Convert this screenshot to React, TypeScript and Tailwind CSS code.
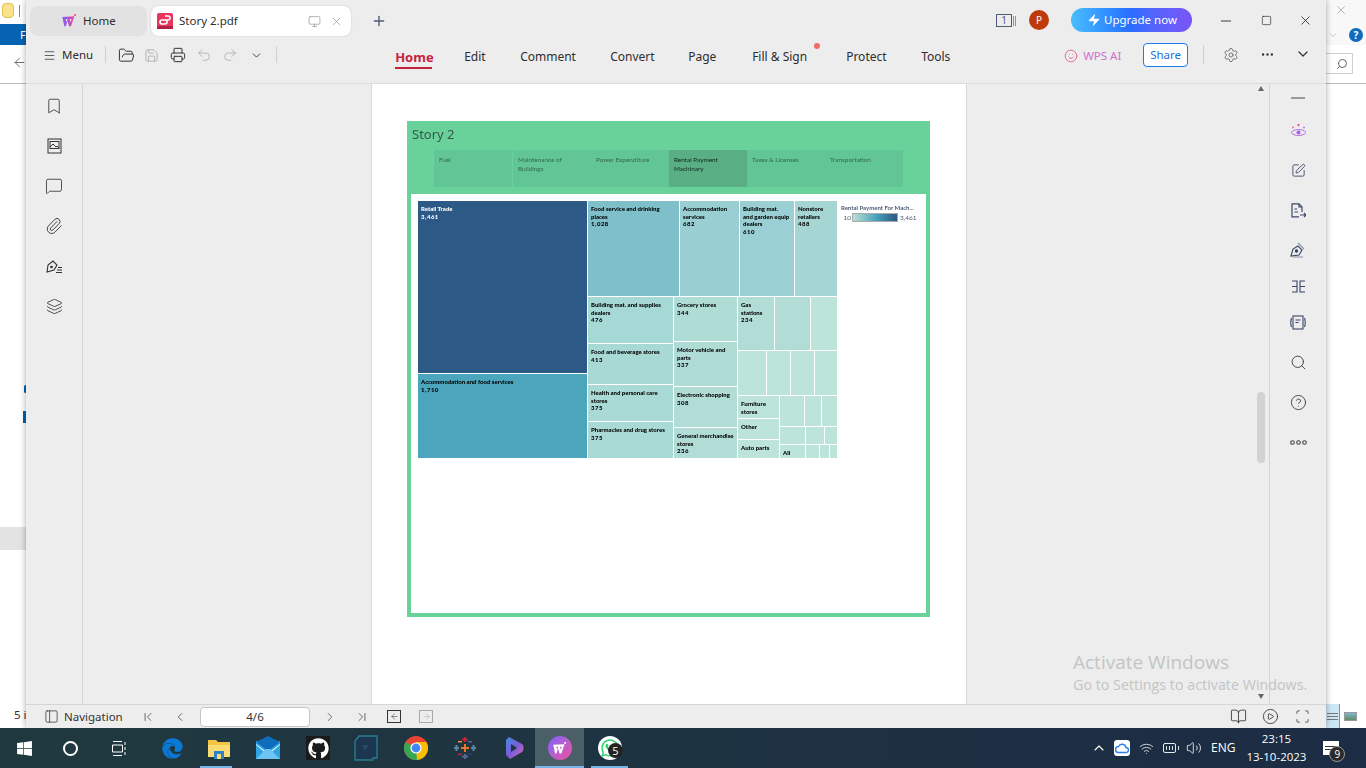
import React from "react";
import {
  Menu, FolderOpen, Save, Printer, Undo2, Redo2, ChevronDown, Monitor, X, Plus, Settings, Ellipsis, Minus, Square,
  Bookmark, MessageSquare, Paperclip, Layers, SquarePen, Search, CircleHelp, PanelLeft, ChevronFirst, ChevronLeft,
  ChevronRight, ChevronLast, ArrowLeft, ArrowRight, BookOpen, CirclePlay, Scan, Wifi, BatteryFull, Volume2, ChevronUp, Zap, Smile,
} from "lucide-react";
import { FaGithub, FaWhatsapp, FaWindows, FaEdge } from "react-icons/fa";

const WpsW = ({ s = 18, grad = false }: { s?: number; grad?: boolean }) => (
  <svg width={s} height={s} viewBox="0 0 24 24" fill="none">
    <defs>
      <linearGradient id="wg" x1="0" x2="1">
        <stop offset="0" stopColor="#7b5cff" />
        <stop offset="1" stopColor="#f0489a" />
      </linearGradient>
    </defs>
    <path d="M2 6l18-1-5 15h-3l-2-8-3 8H5z M7 9l1 5 2-5z M13 9l1 5 2-5z" fill={grad ? "url(#wg)" : "#fff"} fillRule="evenodd" />
    <circle cx="21" cy="3" r="1.6" fill={grad ? "#f0489a" : "#fff"} />
  </svg>
);

const Cell = ({ c, t, n, light }: { c: string; t?: string; n?: string; light?: boolean }) => (
  <div className={`${c} shrink-0 overflow-hidden px-[3px] pt-[4px] text-[6px] leading-[7.5px] font-black ${light ? "text-white" : "text-black"}`}>
    {t && <div className="whitespace-pre-line">{t}</div>}
    {n && <div className="tracking-[0.5px]">{n}</div>}
  </div>
);

const tabs: [string, string][] = [
  ["Edit", "w-[56px]"],
  ["Comment", "w-[90px]"],
  ["Convert", "w-[78px]"],
  ["Page", "w-[64px]"],
  ["Fill & Sign", "w-[94px]"],
  ["Protect", "w-[75px]"],
  ["Tools", "w-[60px]"],
];

const storyTabs: [string, string][] = [
  ["Fuel", "w-[79px] bg-[#62c596] border-r border-[#69d29b] text-[#35694e]"],
  ["Maintenance of Buildings", "w-[78px] bg-[#62c596] text-[#35694e]"],
  ["Power Expenditure", "w-[78px] bg-[#62c596] text-[#35694e]"],
  ["Rental Payment Machinary", "w-[78px] bg-[#5aae84] text-[#10281c]"],
  ["Taxes & Licenses", "w-[78px] bg-[#62c596] text-[#35694e]"],
  ["Transportation", "w-[78px] bg-[#62c596] text-[#35694e]"],
];

function Treemap() {
  return (
    <div className="flex gap-px ml-[7px] mt-[7px] w-[419px] h-[257px] bg-white blur-[0.3px] font-['Lato',sans-serif] shrink-0">
      <div className="flex flex-col gap-px w-[169px]">
        <Cell c="h-[172px] bg-[#2c5985]" t="Retail Trade" n="3,461" light />
        <Cell c="h-[84px] bg-[#4ba5bc]" t="Accommodation and food services" n="1,710" />
      </div>
      <div className="flex flex-col gap-px w-[249px]">
        <div className="flex gap-px h-[95px]">
          <Cell c="w-[91px] bg-[#7fbfc9]" t={"Food service and drinking\nplaces"} n="1,028" />
          <Cell c="w-[59px] bg-[#99cfd2]" t="Accommodation services" n="682" />
          <Cell c="w-[54px] bg-[#9ad0d3]" t={"Building mat.\nand garden equip\ndealers"} n="610" />
          <Cell c="w-[42px] bg-[#a5d6d3]" t="Nonstore retailers" n="488" />
        </div>
        <div className="flex gap-px h-[161px]">
          <div className="flex flex-col gap-px w-[85px]">
            <Cell c="h-[46px] bg-[#a6d8d5]" t="Building mat. and supplies dealers" n="476" />
            <Cell c="h-[40px] bg-[#a8d9d5]" t="Food and beverage stores" n="413" />
            <Cell c="h-[36px] bg-[#a9dad5]" t="Health and personal care stores" n="375" />
            <Cell c="h-[36px] bg-[#a9dad5]" t="Pharmacies and drug stores" n="375" />
          </div>
          <div className="flex flex-col gap-px w-[63px]">
            <Cell c="h-[44px] bg-[#b0dcd6]" t="Grocery stores" n="344" />
            <Cell c="h-[44px] bg-[#b0dcd6]" t="Motor vehicle and parts" n="337" />
            <Cell c="h-[40px] bg-[#b1ddd6]" t="Electronic shopping" n="308" />
            <Cell c="h-[30px] bg-[#b2ddd6]" t="General merchandise stores" n="236" />
          </div>
          <div className="flex flex-col gap-px w-[99px]">
            <div className="flex gap-px h-[53px]">
              <Cell c="w-[36px] bg-[#b2ddd6]" t="Gas stations" n="234" />
              <Cell c="w-[35px] bg-[#b2ddd6]" />
              <Cell c="w-[26px] bg-[#bce4d9]" />
            </div>
            <div className="flex gap-px h-[44px]">
              <Cell c="w-[28px] bg-[#bce4d9]" />
              <Cell c="w-[23px] bg-[#bce4d9]" />
              <Cell c="w-[23px] bg-[#bce4d9]" />
              <Cell c="w-[22px] bg-[#bce4d9]" />
            </div>
            <div className="flex gap-px h-[62px]">
              <div className="flex flex-col gap-px w-[41px]">
                <Cell c="h-[22px] bg-[#bce4d9]" t="Furniture stores" />
                <Cell c="h-[20px] bg-[#bce4d9]" t="Other" />
                <Cell c="h-[18px] bg-[#bce4d9]" t="Auto parts" />
              </div>
              <div className="flex flex-col gap-px w-[57px]">
                <div className="flex gap-px h-[30px]">
                  <Cell c="w-[24px] bg-[#bce4d9]" />
                  <Cell c="w-[16px] bg-[#bce4d9]" />
                  <Cell c="w-[15px] bg-[#bce4d9]" />
                </div>
                <div className="flex gap-px h-[17px]">
                  <Cell c="w-[25px] bg-[#bce4d9]" />
                  <Cell c="w-[18px] bg-[#bce4d9]" />
                  <Cell c="w-[12px] bg-[#bce4d9]" />
                </div>
                <div className="flex gap-px h-[13px]">
                  <Cell c="w-[25px] bg-[#bce4d9]" t="All" />
                  <Cell c="w-[13px] bg-[#bce4d9]" />
                  <Cell c="w-[9px] bg-[#bce4d9]" />
                  <Cell c="w-[7px] bg-[#bce4d9]" />
                </div>
              </div>
            </div>
          </div>
        </div>
      </div>
    </div>
  );
}

function Page() {
  return (
    <div className="w-[596px] h-full bg-white border-x border-[#d8d8d8] pl-[35px] pt-[37px] shrink-0">
      <div className="w-[523px] h-[496px] bg-[#69d29b] border-x-4 border-b-4 border-[#69d29b] flex flex-col">
        <div className="h-[29px] pl-px pt-[5px] text-[13px] leading-[16px] text-[#35574a] font-['Noto_Sans',sans-serif] blur-[0.2px]">Story 2</div>
        <div className="flex ml-[23px] w-[469px] h-[37px] blur-[0.25px] font-['Lato',sans-serif]">
          {storyTabs.map(([t, c]) => (
            <div key={t} className={`${c} px-[5px] pt-[5px] text-[6.4px] leading-[9px]`}>{t}</div>
          ))}
        </div>
        <div className="h-[7px]" />
        <div className="flex-1 bg-white flex items-start">
          <Treemap />
          <div className="ml-[4px] mt-[10px] w-[80px] blur-[0.25px] font-['Lato',sans-serif] text-[#4a5a70]">
            <div className="text-[6px] leading-[8px] font-bold whitespace-nowrap">Rental Payment For Mach...</div>
            <div className="flex items-center text-[6.5px] mt-px">
              <span className="w-[11px] text-right pr-px">10</span>
              <div className="w-[46px] h-[9px] border border-[#aaaaaa] bg-gradient-to-r from-[#b8e0d6] via-[#4ba5bc] to-[#2c5985]" />
              <span className="pl-[2px]">3,461</span>
            </div>
          </div>
        </div>
      </div>
    </div>
  );
}

const Rail = ({ className, children }: { className: string; children: React.ReactNode }) => (
  <div className={`flex flex-col items-center ${className}`}>{children}</div>
);

const RI = ({ h, children }: { h: string; children: React.ReactNode }) => (
  <div className={`${h} w-full flex items-center justify-center shrink-0`}>{children}</div>
);

function Window() {
  return (
    <div className="w-[1300px] h-full bg-[#ededed] flex flex-col shadow-[0_0_6px_rgba(0,0,0,0.35)] relative z-10 text-[#2e2e2e]">
      {/* tab row */}
      <div className="h-[40px] flex items-start pt-[6px] pl-[4px] shrink-0">
        <div className="w-[117px] h-[30px] bg-[#e2e2e2] rounded-lg flex items-center pl-[31px] gap-[6px] text-[11.5px]">
          <WpsW s={16} grad />
          <span>Home</span>
        </div>
        <div className="w-[200px] h-[30px] ml-[4px] bg-white rounded-lg flex items-center pl-[6px] text-[11.5px] shadow-[0_0_2px_rgba(0,0,0,0.15)]">
          <svg width="16" height="16" viewBox="0 0 16 16" className="shrink-0">
            <rect width="16" height="16" rx="2" fill="#e8365d" />
            <rect y="13" width="16" height="3" fill="#b41f43" />
            <path d="M8 3h3a2 2 0 0 1 0 4H8a2 2 0 0 1 0 4H5a1.5 1.5 0 0 1 0-4h3" fill="none" stroke="#fff" strokeWidth="1.6" />
          </svg>
          <span className="ml-[6px] w-[129px] shrink-0 whitespace-nowrap">Story 2.pdf</span>
          <Monitor size={13} strokeWidth={1.2} className="shrink-0 text-[#8c8c8c]" />
          <X size={13} strokeWidth={1.2} className="shrink-0 ml-[9px] text-[#8c8c8c]" />
        </div>
        <Plus size={16} strokeWidth={2} className="ml-[20px] mt-[7px] text-[#4d5a78]" />
        <div className="ml-[609px] mt-[8px] w-[16px] h-[13px] border border-[#4d5a78] text-[10px] leading-[11px] text-center text-[#4d5a78]">1</div>
        <div className="ml-[1px] mt-[10px] w-[3px] h-[10px] border-x border-[#8a93a8]" />
        <div className="ml-[13px] mt-[4px] w-[20px] h-[20px] rounded-full bg-[#bf3a0a] text-white text-[10px] flex items-center justify-center">P</div>
        <div className="ml-[22px] mt-[2px] w-[121px] h-[24px] rounded-full bg-gradient-to-r from-[#4bbdfd] via-[#2a6cff] to-[#7a54f7] text-white text-[11.5px] flex items-center pl-[16px] gap-[3px]">
          <Zap size={14} fill="#fff" strokeWidth={0} />
          <span>Upgrade now</span>
        </div>
        <Minus size={16} strokeWidth={1.3} className="ml-[26px] mt-[7px] text-[#222]" />
        <Square size={11} strokeWidth={1.4} className="ml-[27px] mt-[9px] text-[#222]" />
        <X size={15} strokeWidth={1.3} className="ml-[26px] mt-[7px] text-[#222]" />
      </div>

      {/* toolbar */}
      <div className="h-[44px] shrink-0 border-b border-[#dcdcdc] flex items-start pt-[3px] relative">
        <Menu size={13} strokeWidth={1.4} className="ml-[17px] mt-[6px] text-[#333]" />
        <span className="ml-[6px] text-[11.5px] leading-[24px]">Menu</span>
        <div className="ml-[12px] mt-[3px] w-px h-[17px] bg-[#d0d0d0]" />
        <FolderOpen size={17} strokeWidth={1.4} className="ml-[12px] mt-[4px] text-[#333]" />
        <Save size={15} strokeWidth={1.3} className="ml-[9px] mt-[5px] text-[#a9a9a9]" />
        <Printer size={16} strokeWidth={1.5} className="ml-[11px] mt-[4px] text-[#333]" />
        <Undo2 size={16} strokeWidth={1.2} className="ml-[10px] mt-[4px] text-[#a9a9a9]" />
        <Redo2 size={16} strokeWidth={1.2} className="ml-[10px] mt-[4px] text-[#a9a9a9]" />
        <ChevronDown size={13} strokeWidth={1.8} className="ml-[12px] mt-[6px] text-[#444]" />
        <div className="ml-[13px] mt-[3px] w-px h-[17px] bg-[#d0d0d0]" />
        <div className="ml-[118px] flex text-[12px] leading-[18px] pt-[5px]">
          <div className="w-[69px]">
            <span className="inline-block font-bold text-[13px] text-[#c8213f] border-b-2 border-[#c8213f] pb-px w-[37px] h-[21px] whitespace-nowrap">Home</span>
          </div>
          {tabs.map(([t, w]) => (
            <div key={t} className={`${w} relative`}>
              {t}
              {t === "Fill & Sign" && <span className="absolute left-[62px] -top-[5px] w-[6px] h-[6px] rounded-full bg-[#f26a6a]" />}
            </div>
          ))}
        </div>
        <div className="ml-[83px] w-[57px] mt-[4px] flex items-center text-[11.5px] text-[#cf6fcf] gap-[5px]">
          <Smile size={14} strokeWidth={1.5} className="shrink-0 text-[#e0609c]" />
          <span className="whitespace-nowrap">WPS AI</span>
        </div>
        <div className="ml-[22px] w-[45px] h-[24px] rounded border border-[#1a7cf0] bg-white text-[#1a6fdc] text-[11.5px] flex items-center justify-center">Share</div>
        <div className="ml-[15px] mt-[2px] w-px h-[19px] bg-[#cfcfcf]" />
        <Settings size={16} strokeWidth={1.3} className="ml-[19px] mt-[4px] text-[#666]" />
        <Ellipsis size={15} strokeWidth={1.8} className="ml-[21px] mt-[4px] text-[#333]" />
        <ChevronDown size={16} strokeWidth={1.8} className="ml-[20px] mt-[3px] text-[#333]" />
      </div>

      {/* body */}
      <div className="flex-1 flex min-h-0">
        <Rail className="w-[57px] border-r border-[#d4d4d4] pt-[2px] shrink-0">
          <RI h="h-[40px]"><Bookmark size={18} strokeWidth={1.1} className="text-[#333]" /></RI>
          <RI h="h-[40px]">
            <svg width="15" height="16" viewBox="0 0 15 16" fill="none" stroke="#333" strokeWidth="1">
              <rect x="1" y="1" width="13" height="14" />
              <rect x="3" y="3.5" width="9" height="7" />
              <path d="M3 9l3-3 3 3 1-1 2 2" />
            </svg>
          </RI>
          <RI h="h-[40px]"><MessageSquare size={18} strokeWidth={1.1} className="text-[#333]" /></RI>
          <RI h="h-[40px]"><Paperclip size={18} strokeWidth={1.2} className="text-[#333]" /></RI>
          <RI h="h-[40px]">
            <svg width="17" height="16" viewBox="0 0 17 16" fill="none" stroke="#333" strokeWidth="1.1">
              <path d="M1 14l1-7 5-4 4 4-3 5z" />
              <circle cx="5.5" cy="9" r="0.8" fill="#333" />
              <path d="M11 12h5M10 14.5h6M12 9.5h4" />
            </svg>
          </RI>
          <RI h="h-[40px]"><Layers size={17} strokeWidth={1.2} className="text-[#333]" /></RI>
        </Rail>
        <div className="flex-1 flex justify-center pr-[1px] relative min-w-0">
          <div className="w-[288px] shrink-0" />
          <Page />
          <div className="flex-1 flex justify-end">
            <div className="w-[14px] flex flex-col items-center pt-px">
              <div className="w-0 h-0 border-x-[3.5px] border-x-transparent border-b-[5px] border-b-[#666] mt-[1px]" />
              <div className="mt-[301px] w-[8px] h-[71px] bg-[#d2d2d2] rounded-full" />
              <div className="mt-[231px] w-0 h-0 border-x-[3.5px] border-x-transparent border-t-[5px] border-t-[#666]" />
            </div>
          </div>
        </div>
        <Rail className="w-[57px] border-l border-[#d4d4d4] shrink-0 text-[#3b4668]">
          <RI h="h-[28px]"><div className="w-[14px] h-[1.5px] bg-[#9a9a9a]" /></RI>
          <RI h="h-[38px]">
            <svg width="17" height="16" viewBox="0 0 17 16" fill="none">
              <path d="M1 9.5c3-4 12-4 15 0c-3 4-12 4-15 0z" stroke="#b565e8" strokeWidth="1" />
              <circle cx="8.5" cy="9.5" r="2" fill="#a35be8" />
              <circle cx="8.5" cy="2" r="1.2" fill="#e0609c" />
              <circle cx="3" cy="4.5" r="0.9" fill="#e0609c" />
              <circle cx="14" cy="4.5" r="0.9" fill="#b565e8" />
            </svg>
          </RI>
          <RI h="h-[40px]"><SquarePen size={15} strokeWidth={1.4} /></RI>
          <RI h="h-[40px]">
            <svg width="15" height="15" viewBox="0 0 15 15" fill="none" stroke="#3b4668" strokeWidth="1.2">
              <path d="M11 9V4L8 .8H1v13h7" />
              <path d="M8 1v3h3M3.5 6H6M3.5 9H7M9 12h6M13 10l2 2-2 2" />
            </svg>
          </RI>
          <RI h="h-[40px]">
            <svg width="16" height="16" viewBox="0 0 16 16" fill="none" stroke="#3b4668" strokeWidth="1.1">
              <path d="M1 14l2-7 5-3 4 4-3 5z" />
              <circle cx="6.5" cy="9" r="1.2" fill="#3b4668" />
              <path d="M8 1l6 6M3 15h10" stroke="#8890a8" />
            </svg>
          </RI>
          <RI h="h-[32px]">
            <svg width="15" height="13" viewBox="0 0 15 13" fill="none" stroke="#3b4668" strokeWidth="1.1">
              <path d="M1 1h5v11H1M1 6.5h5M14 1H9v11h5M9 6.5h5" />
            </svg>
          </RI>
          <RI h="h-[40px]">
            <svg width="16" height="15" viewBox="0 0 16 15" fill="none" stroke="#3b4668" strokeWidth="1.1">
              <rect x="3" y="1" width="10" height="13" />
              <path d="M1.5 3c-1 3-1 6 0 9M14.5 3c1 3 1 6 0 9M5.5 5h5M5.5 7.5h3" />
            </svg>
          </RI>
          <RI h="h-[40px]"><Search size={17} strokeWidth={1.2} className="text-[#333]" /></RI>
          <RI h="h-[40px]"><CircleHelp size={17} strokeWidth={1.2} className="text-[#333]" /></RI>
          <RI h="h-[40px]">
            <svg width="17" height="5" viewBox="0 0 17 5" fill="none" stroke="#444" strokeWidth="1.1">
              <circle cx="2.5" cy="2.5" r="1.8" />
              <circle cx="8.5" cy="2.5" r="1.8" />
              <circle cx="14.5" cy="2.5" r="1.8" />
            </svg>
          </RI>
        </Rail>
      </div>

      {/* status bar */}
      <div className="h-[24px] shrink-0 border-t border-[#d5d5d5] flex items-center text-[#333]">
        <PanelLeft size={15} strokeWidth={1.2} className="ml-[18px] shrink-0" />
        <span className="ml-[5px] w-[58px] shrink-0 text-[11.5px] whitespace-nowrap">Navigation</span>
        <ChevronFirst size={14} strokeWidth={1.2} className="ml-[19px] shrink-0" />
        <ChevronLeft size={14} strokeWidth={1.2} className="ml-[18px] shrink-0" />
        <div className="ml-[13px] w-[110px] h-[20px] shrink-0 bg-white border border-[#c4c4c4] rounded text-[11.5px] flex items-center justify-center">4/6</div>
        <ChevronRight size={14} strokeWidth={1.2} className="ml-[13px] shrink-0" />
        <ChevronLast size={14} strokeWidth={1.2} className="ml-[18px] shrink-0" />
        <div className="ml-[18px] w-[14px] h-[13px] shrink-0 border border-[#333] flex items-center justify-center"><ArrowLeft size={9} strokeWidth={1.4} /></div>
        <div className="ml-[18px] w-[14px] h-[13px] shrink-0 border border-[#aaa] flex items-center justify-center text-[#aaa]"><ArrowRight size={9} strokeWidth={1.4} /></div>
        <BookOpen size={17} strokeWidth={1.2} className="ml-[797px] shrink-0" />
        <CirclePlay size={17} strokeWidth={1.2} className="ml-[15px] shrink-0" />
        <Scan size={15} strokeWidth={1.3} className="ml-[16px] shrink-0" />
      </div>
    </div>
  );
}

function LeftSliver() {
  return (
    <div className="w-[26px] h-full bg-white flex flex-col shrink-0 overflow-hidden">
      <div className="h-[24px] bg-white flex items-start pt-[3px] pl-[2px] gap-[5px] shrink-0">
        <div className="w-[12px] h-[15px] bg-[#fbe38e] border border-[#e2c04e] rounded-sm" />
        <div className="w-px h-[12px] bg-[#888] mt-[2px]" />
      </div>
      <div className="h-[21px] bg-[#0563b1] text-white text-[11px] leading-[21px] pl-[20px] shrink-0">F</div>
      <div className="h-[39px] border-b border-[#bcbcbc] pl-[12px] pt-[10px] shrink-0">
        <ArrowLeft size={15} strokeWidth={1.5} className="text-[#666]" />
      </div>
      <div className="h-[301px] shrink-0" />
      <div className="w-[3px] h-[8px] bg-[#0563b1] rounded-full ml-[24px] shrink-0" />
      <div className="h-[18px] shrink-0" />
      <div className="w-[3px] h-[12px] bg-[#0563b1] ml-[23px] shrink-0" />
      <div className="h-[104px] shrink-0" />
      <div className="h-[23px] bg-[#e3e3e3] shrink-0" />
      <div className="h-[157px] shrink-0" />
      <div className="text-[11.5px] leading-[16px] text-[#333] pl-[14px] whitespace-nowrap">5 i</div>
    </div>
  );
}

function RightSliver() {
  return (
    <div className="w-[40px] h-full bg-white flex flex-col shrink-0 overflow-hidden">
      <div className="h-[24px] bg-[#f8f8f8] pl-[8px] pt-[3px] shrink-0">
        <X size={14} strokeWidth={1} className="text-[#888]" />
      </div>
      <div className="h-[21px] bg-[#f8f8f8] flex items-center pl-[1px] gap-[10px] shrink-0">
        <ChevronDown size={12} strokeWidth={1} className="text-[#999]" />
        <div className="w-[14px] h-[14px] rounded-full bg-[#0f6cbd] text-white text-[10px] font-bold leading-[14px] text-center">?</div>
      </div>
      <div className="h-[39px] border-b border-[#bcbcbc] pt-[8px] shrink-0">
        <div className="w-[27px] h-[21px] border border-[#d0d0d0] border-l-0 flex items-center justify-end pr-[4px]">
          <Search size={12} strokeWidth={2} className="text-[#666] -scale-x-100" />
        </div>
      </div>
      <div className="h-[620px] shrink-0" />
      <div className="h-[24px] flex items-center shrink-0">
        <div className="w-[14px] h-[24px] bg-[#cde6f7] border-r border-[#4aa3df] flex flex-col justify-center gap-[2px] pl-[1px]">
          <div className="h-px w-[11px] bg-[#777]" />
          <div className="h-px w-[11px] bg-[#777]" />
          <div className="h-px w-[11px] bg-[#777]" />
        </div>
        <div className="ml-[4px] w-[13px] h-[9px] border border-[#999] bg-gradient-to-b from-[#7fb5d9] to-[#5f8f5f]" />
      </div>
    </div>
  );
}

function Taskbar() {
  return (
    <div className="h-[40px] shrink-0 bg-gradient-to-r from-[#20393f] to-[#1c2c44] flex items-center text-white relative z-20">
      <FaWindows size={17} className="ml-[16px] shrink-0" />
      <div className="ml-[30px] w-[15px] h-[15px] rounded-full border-2 border-white shrink-0" />
      <svg width="16" height="15" viewBox="0 0 16 15" fill="none" stroke="#fff" className="ml-[34px] shrink-0">
        <path d="M1 .5h9M1 14.5h9M.5 4h10v7H.5zM13 1v3M13 6v3M13 11v3" />
      </svg>
      <FaEdge size={21} className="ml-[34px] text-[#0a78d7] shrink-0" />
      <div className="ml-[16px] w-[40px] h-[40px] flex items-center justify-center relative shrink-0">
        <svg width="22" height="21" viewBox="0 0 22 21">
          <path d="M0 2h8l2 2h12v15H0z" fill="#f4c542" />
          <rect x="0" y="7" width="22" height="12" fill="#fbdc74" />
          <rect x="6" y="13" width="10" height="8" fill="#2f82c8" />
          <rect x="9" y="16" width="4" height="5" fill="#fbdc74" />
        </svg>
        <div className="absolute bottom-0 left-[1px] w-[32px] h-[2px] bg-[#74b4e6]" />
      </div>
      <svg width="24" height="24" viewBox="0 0 24 24" className="ml-[17px] shrink-0">
        <rect y="5" width="24" height="18" fill="#2ea3e6" />
        <path d="M0 6L12 0l12 6-12 9z" fill="#0f6cbd" />
        <path d="M0 8l12 9 12-9v1L12 19 0 9z" fill="#d8f0fb" />
        <path d="M0 23l10-10h4l10 10z" fill="#6cc4f2" />
      </svg>
      <div className="ml-[26px] w-[24px] h-[24px] bg-[#1b1b1b] flex items-center justify-center shrink-0"><FaGithub size={21} /></div>
      <svg width="24" height="26" viewBox="0 0 24 26" fill="none" className="ml-[24px] shrink-0">
        <path d="M5 1h18v22h-4v2H1V6z" fill="#1c3650" stroke="#2b7f92" strokeWidth="1.3" />
        <path d="M8 10l7 0-4 6z" fill="#244a66" />
      </svg>
      <svg width="24" height="24" viewBox="0 0 24 24" className="ml-[26px] shrink-0">
        <circle cx="12" cy="12" r="12" fill="#ea4335" />
        <path d="M12 12L1.6 18A12 12 0 0 1 1.6 6z" fill="#34a853" />
        <path d="M1.6 18A12 12 0 0 0 12 24 12 12 0 0 0 22.4 18L12 12z" fill="#34a853" />
        <path d="M12 6h10.4A12 12 0 0 1 13 24L12 12z" fill="#fbbc05" />
        <circle cx="12" cy="12" r="5.6" fill="#fff" />
        <circle cx="12" cy="12" r="4.4" fill="#4285f4" />
      </svg>
      <svg width="24" height="24" viewBox="0 0 24 24" className="ml-[25px] shrink-0">
        <rect x="11" y="8" width="2" height="8" fill="#e97627" />
        <rect x="8" y="11" width="8" height="2" fill="#e97627" />
        <rect x="11" y="1" width="2" height="5" fill="#c72037" />
        <rect x="9" y="2.5" width="6" height="2" fill="#c72037" />
        <rect x="11" y="18" width="2" height="5" fill="#5b6591" />
        <rect x="9" y="19.5" width="6" height="2" fill="#5b6591" />
        <rect x="1" y="11" width="5" height="2" fill="#5b879b" />
        <rect x="2.5" y="9" width="2" height="6" fill="#5b879b" />
        <rect x="18" y="11" width="5" height="2" fill="#5b879b" />
        <rect x="19.5" y="9" width="2" height="6" fill="#5b879b" />
        <rect x="5" y="5" width="4" height="1.5" fill="#eb912c" />
        <rect x="15" y="5" width="4" height="1.5" fill="#5c6692" />
        <rect x="5" y="17.5" width="4" height="1.5" fill="#c72037" />
        <rect x="15" y="17.5" width="4" height="1.5" fill="#1f457e" />
      </svg>
      <svg width="24" height="24" viewBox="0 0 24 24" className="ml-[25px] shrink-0">
        <defs>
          <linearGradient id="cp" x1="0" y1="0" x2="1" y2="1">
            <stop offset="0" stopColor="#3f8fe0" />
            <stop offset="0.5" stopColor="#7a5cd8" />
            <stop offset="1" stopColor="#d86bb0" />
          </linearGradient>
        </defs>
        <path d="M7 1l13 7c2 1 2 7 0 8L8 23 4 19V4z" fill="url(#cp)" />
        <path d="M9 8l6 4-6 4z" fill="#1f3344" />
      </svg>
      <div className="ml-[9px] w-[49px] h-[40px] bg-[#4a5f68] flex items-center justify-center relative shrink-0">
        <div className="w-[24px] h-[24px] rounded-full bg-gradient-to-br from-[#7b5cff] to-[#f0489a] flex items-center justify-center"><WpsW s={15} /></div>
        <div className="absolute bottom-0 inset-x-0 h-[2px] bg-[#74b4e6]" />
      </div>
      <div className="ml-[7px] w-[37px] h-[40px] flex items-center justify-center relative shrink-0">
        <div className="w-[24px] h-[24px] rounded-full bg-white flex items-center justify-center text-[#25d366]"><FaWhatsapp size={20} /></div>
        <div className="absolute left-[17px] top-[15px] w-[15px] h-[15px] rounded-full bg-[#222] text-white text-[11px] leading-[15px] text-center font-['Open_Sans',sans-serif]">5</div>
        <div className="absolute bottom-0 inset-x-0 h-[2px] bg-[#74b4e6]" />
      </div>
      <ChevronUp size={16} strokeWidth={1.6} className="ml-[463px] shrink-0" />
      <div className="ml-[7px] w-[16px] h-[16px] rounded-[3px] bg-white flex items-center justify-center shrink-0">
        <svg width="14" height="12" viewBox="0 0 14 12"><path d="M3.5 10.5a3 3 0 0 1 0-6 4 4 0 0 1 7.5 1 2.5 2.5 0 0 1 0 5z" fill="none" stroke="#2f80ed" strokeWidth="1.5" /></svg>
      </div>
      <Wifi size={15} strokeWidth={1.2} className="ml-[9px] shrink-0" />
      <BatteryFull size={18} strokeWidth={1.2} className="ml-[8px] shrink-0" />
      <Volume2 size={16} strokeWidth={1.2} className="ml-[6px] shrink-0" />
      <span className="ml-[9px] text-[12px] font-['Open_Sans',sans-serif] shrink-0">ENG</span>
      <div className="ml-[11px] w-[60px] text-center text-[11.5px] leading-[18px] font-['Open_Sans',sans-serif] shrink-0">
        <div>23:15</div>
        <div className="whitespace-nowrap">13-10-2023</div>
      </div>
      <div className="ml-[17px] relative w-[16px] h-[14px] bg-white flex flex-col gap-[2px] justify-center pl-[2px] shrink-0">
        <div className="h-px w-[12px] bg-[#333]" />
        <div className="h-px w-[12px] bg-[#333]" />
        <div className="absolute left-[6px] top-[5px] w-[16px] h-[16px] rounded-full bg-[#2a2a2a] border border-[#999] text-[10px] leading-[14px] text-center font-['Open_Sans',sans-serif]">9</div>
      </div>
    </div>
  );
}

export default function App() {
  return (
    <div className="w-[1366px] h-[768px] overflow-hidden flex flex-col bg-white relative font-['Noto_Sans',sans-serif]">
      <div className="h-[728px] flex shrink-0">
        <LeftSliver />
        <Window />
        <RightSliver />
      </div>
      <Taskbar />
      <div className="absolute left-[1073px] top-[650px] z-30 text-[#c4c4c4] font-['Open_Sans',sans-serif] pointer-events-none whitespace-nowrap">
        <div className="text-[19px] leading-[25px]">Activate Windows</div>
        <div className="text-[14.3px] leading-[20px]">Go to Settings to activate Windows.</div>
      </div>
    </div>
  );
}
